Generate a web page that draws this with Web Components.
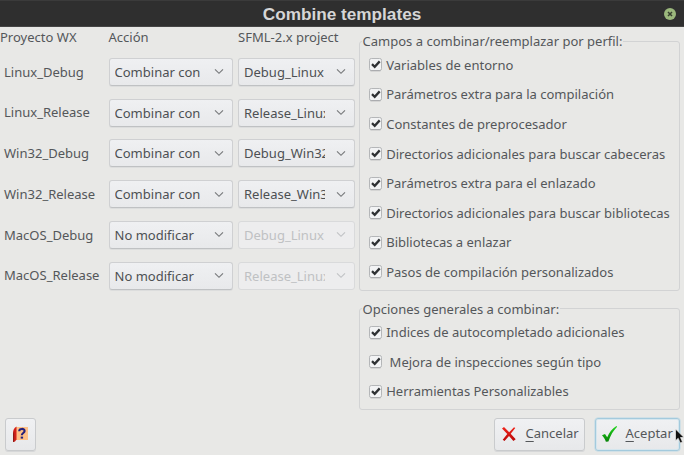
<!DOCTYPE html>
<html lang="es">
<head>
<meta charset="utf-8">
<title>Combine templates</title>
<style>
html,body{margin:0;height:100%;overflow:hidden}
body{background:#e8e8e6;color:#54575a;font:13.03px/18px "Noto Sans","Open Sans",sans-serif}
</style>
</head>
<body>
<template-dialog></template-dialog>
<script>
const define = (name, html, setup) => customElements.define(name, class extends HTMLElement {
  connectedCallback() {
    if (this.shadowRoot) return;
    const t = document.createElement('template');
    t.innerHTML = html;
    this.attachShadow({mode: 'open'}).append(t.content.cloneNode(true));
    if (setup) setup(this, this.shadowRoot);
  }
});

define('title-bar', `<style>
:host{display:grid;grid-template-columns:30px 1fr 30px;align-items:center;height:27px;box-sizing:border-box;
background:#2f2f2f;border-top:1px solid #3b3b3b;border-bottom:1px solid #454545;color:#d6d6d6;font:bold 17.2px/25px "Liberation Sans",Arial,sans-serif}
h1{grid-column:2;font:inherit;margin:0;text-align:center;padding-top:1px;white-space:nowrap}
svg{display:block;margin-left:9px}
</style><h1><slot></slot></h1>
<svg width="14" height="14" viewBox="0 0 14 14"><circle cx="7" cy="7" r="6" fill="#9bb87c"/><path d="M5 5l4 4M9 5l-4 4" stroke="#37402f" stroke-width="1.5"/></svg>`);

define('combo-box', `<style>
:host{display:flex;box-sizing:border-box;width:124px;height:28px;border:1px solid #cfd0d2;border-bottom-color:#bfc1c3;border-radius:3px;
background:linear-gradient(#eff0f2,#e8e9eb);box-shadow:0 1px 0 #dcdddd;align-items:center;padding:0 8px 0 5px;color:#4d5053}
:host([narrow]){width:116.5px}
:host([disabled]){color:#bfc1c3;background:#ededee;border-color:#d9dadb;box-shadow:none}
span{flex:1;overflow:hidden;white-space:nowrap;margin-right:11px}
svg{flex:none;color:#77797b}
:host([disabled]) svg{color:#c1c3c5}
</style><span><slot></slot></span>
<svg width="10" height="7" viewBox="0 0 10 7"><path d="M1 1.300l4 4 4-4" fill="none" stroke="currentColor" stroke-width="1.15"/></svg>`);

define('check-item', `<style>
:host{display:flex;align-items:center;height:29.6px;white-space:pre}
svg{flex:none;margin-right:3.200px}
</style><svg width="15" height="15" viewBox="0 0 15 15"><rect x="1.500" y="1.500" width="12" height="12" rx="1.800" fill="#f2f3f4" stroke="#b4b6b8"/><path d="M2.500 13.800h10" stroke="#a7a9ab"/><path d="M4 7.200l2.700 2.600 5-5.400" fill="none" stroke="#2e3133" stroke-width="2.300"/></svg><slot></slot>`);

define('group-box', `<style>
:host{display:block}
fieldset{box-sizing:border-box;height:100%;margin:0;min-width:0;border:1px solid #d2d3d4;border-radius:3px;padding:0 0 0 8px}
legend{height:18px;margin-left:-6.500px;padding:0 1px;white-space:nowrap}
</style><fieldset><legend></legend><slot></slot></fieldset>`, (el, r) => r.querySelector('legend').textContent = el.getAttribute('label'));

define('push-button', `<style>
:host{display:flex;box-sizing:border-box;height:33px;border:1px solid #c9cbcd;border-radius:3px;background:linear-gradient(#f0f1f3,#e7e8ea);
box-shadow:0 1px 0 #d6d7d8;align-items:center;white-space:nowrap}
:host([default]){border-color:#a3cadd;box-shadow:inset 0 0 0 1px #d5e6ee,0 0 0 .5px #b9d8e6}
::slotted(svg){flex:none;margin-bottom:2px}
::slotted(span){margin-bottom:3px}
</style><slot></slot>`);

define('template-dialog', `<style>
:host{display:grid;grid-template:27px 383px 45px/359px 1fr;width:684px;height:455px;position:relative;overflow:hidden}
title-bar{grid-column:1/3}
.map{display:grid;grid-template-columns:108.5px 129.5px 117px;grid-template-rows:24.4px repeat(6,40.75px);align-items:center;justify-items:start;align-content:start;white-space:nowrap}
.map>b{font-weight:inherit;align-self:start;padding-top:1px}
.map>span{padding-left:4px;margin-top:-.4px}
.side{display:flex;flex-direction:column;padding-top:5px;gap:8.500px}
.side>*{width:321px}
.fields{height:259px}.general{height:110.500px}
footer{grid-column:1/3;display:flex;padding:8px 4px 0 5px;box-sizing:border-box}
.help{width:31px;justify-content:center;margin-right:auto}
.cancel{width:91px;margin-right:10px;padding-left:6px}
.ok{width:85px;padding-left:5px}
u{text-decoration-thickness:1px;text-underline-offset:2.5px}
.cursor{position:absolute;left:674px;top:428px}
</style>
<title-bar>Combine templates</title-bar>
<section class="map"></section>
<section class="side">
<group-box class="fields" label="Campos a combinar/reemplazar por perfil:"><check-item>Variables de entorno</check-item><check-item>Parámetros extra para la compilación</check-item><check-item>Constantes de preprocesador</check-item><check-item>Directorios adicionales para buscar cabeceras</check-item><check-item>Parámetros extra para el enlazado</check-item><check-item>Directorios adicionales para buscar bibliotecas</check-item><check-item>Bibliotecas a enlazar</check-item><check-item>Pasos de compilación personalizados</check-item></group-box>
<group-box class="general" label="Opciones generales a combinar:"><check-item>Indices de autocompletado adicionales</check-item><check-item> Mejora de inspecciones según tipo</check-item><check-item>Herramientas Personalizables</check-item></group-box>
</section>
<footer>
<push-button class="help"><svg width="17" height="18" viewBox="0 0 17 18"><path d="M4 2h12v13H4z" fill="#ffc087"/><path d="M4.500 1.500C2 3 1 5 1 8v9l2-.5 1.500-2z" fill="#d3201a"/><path d="M1 9v8l1.200-.3V6z" fill="#8d1b18"/><path d="M7.200 6.200C7.200 3.200 12.600 3.200 12.600 6c0 2-2.800 2-2.800 4.200" fill="none" stroke="#24207c" stroke-width="2.100"/><path d="M8.700 11.600h2.400v2H8.700z" fill="#24207c"/></svg></push-button>
<push-button class="cancel"><svg width="16" height="16" viewBox="0 0 16 16" style="margin-right:8.500px"><defs><linearGradient id="r" x2="0" y2="1"><stop stop-color="#f2251c"/><stop offset="1" stop-color="#b90808"/></linearGradient></defs><path d="M1 2.500L3 1l5.200 5.200L13 1.200l1.300.8-4.600 5.800 5 5.400-2.300 1.700L8 9.900 3.500 15l-1.800-1.200L6.300 8z" fill="url(#r)"/></svg><span><u>C</u>ancelar</span></push-button>
<push-button class="ok" default><svg width="18" height="18" viewBox="0 0 18 18" style="margin-right:6.500px"><defs><linearGradient id="g" x2="0" y2="1"><stop stop-color="#20d51c"/><stop offset="1" stop-color="#078207"/></linearGradient></defs><path d="M1 10.300l3-1.200 2.200 3.200C8.400 7.400 11 3.800 15.400 1l.7.8C12.200 5.800 9.500 10.400 7.400 16.500l-2.500.2C3.900 14.200 2.800 12.200 1 10.300z" fill="url(#g)"/></svg><span><u>A</u>ceptar</span></push-button>
</footer>
<svg class="cursor" width="10" height="17" viewBox="0 0 10 17"><path d="M1.500 1v11.800l2.700-2.500 2 4.600 2.300-1-2-4.400H10z" fill="#111" stroke="#eee" stroke-width=".7"/></svg>`, (el, r) => {
  const rows = [['Linux_Debug','Combinar con','Debug_Linux'],['Linux_Release','Combinar con','Release_Linux'],['Win32_Debug','Combinar con','Debug_Win32'],['Win32_Release','Combinar con','Release_Win32'],['MacOS_Debug','No modificar','Debug_Linux'],['MacOS_Release','No modificar','Release_Linux']];
  r.querySelector('.map').innerHTML = '<b>Proyecto WX</b><b>Acción</b><b>SFML-2.x project</b>' + rows.map(([a,b,c]) =>
    `<span>${a}</span><combo-box>${b}</combo-box><combo-box narrow ${b[0]==='N'?'disabled':''}>${c}</combo-box>`).join('');
});
</script>
</body>
</html>
